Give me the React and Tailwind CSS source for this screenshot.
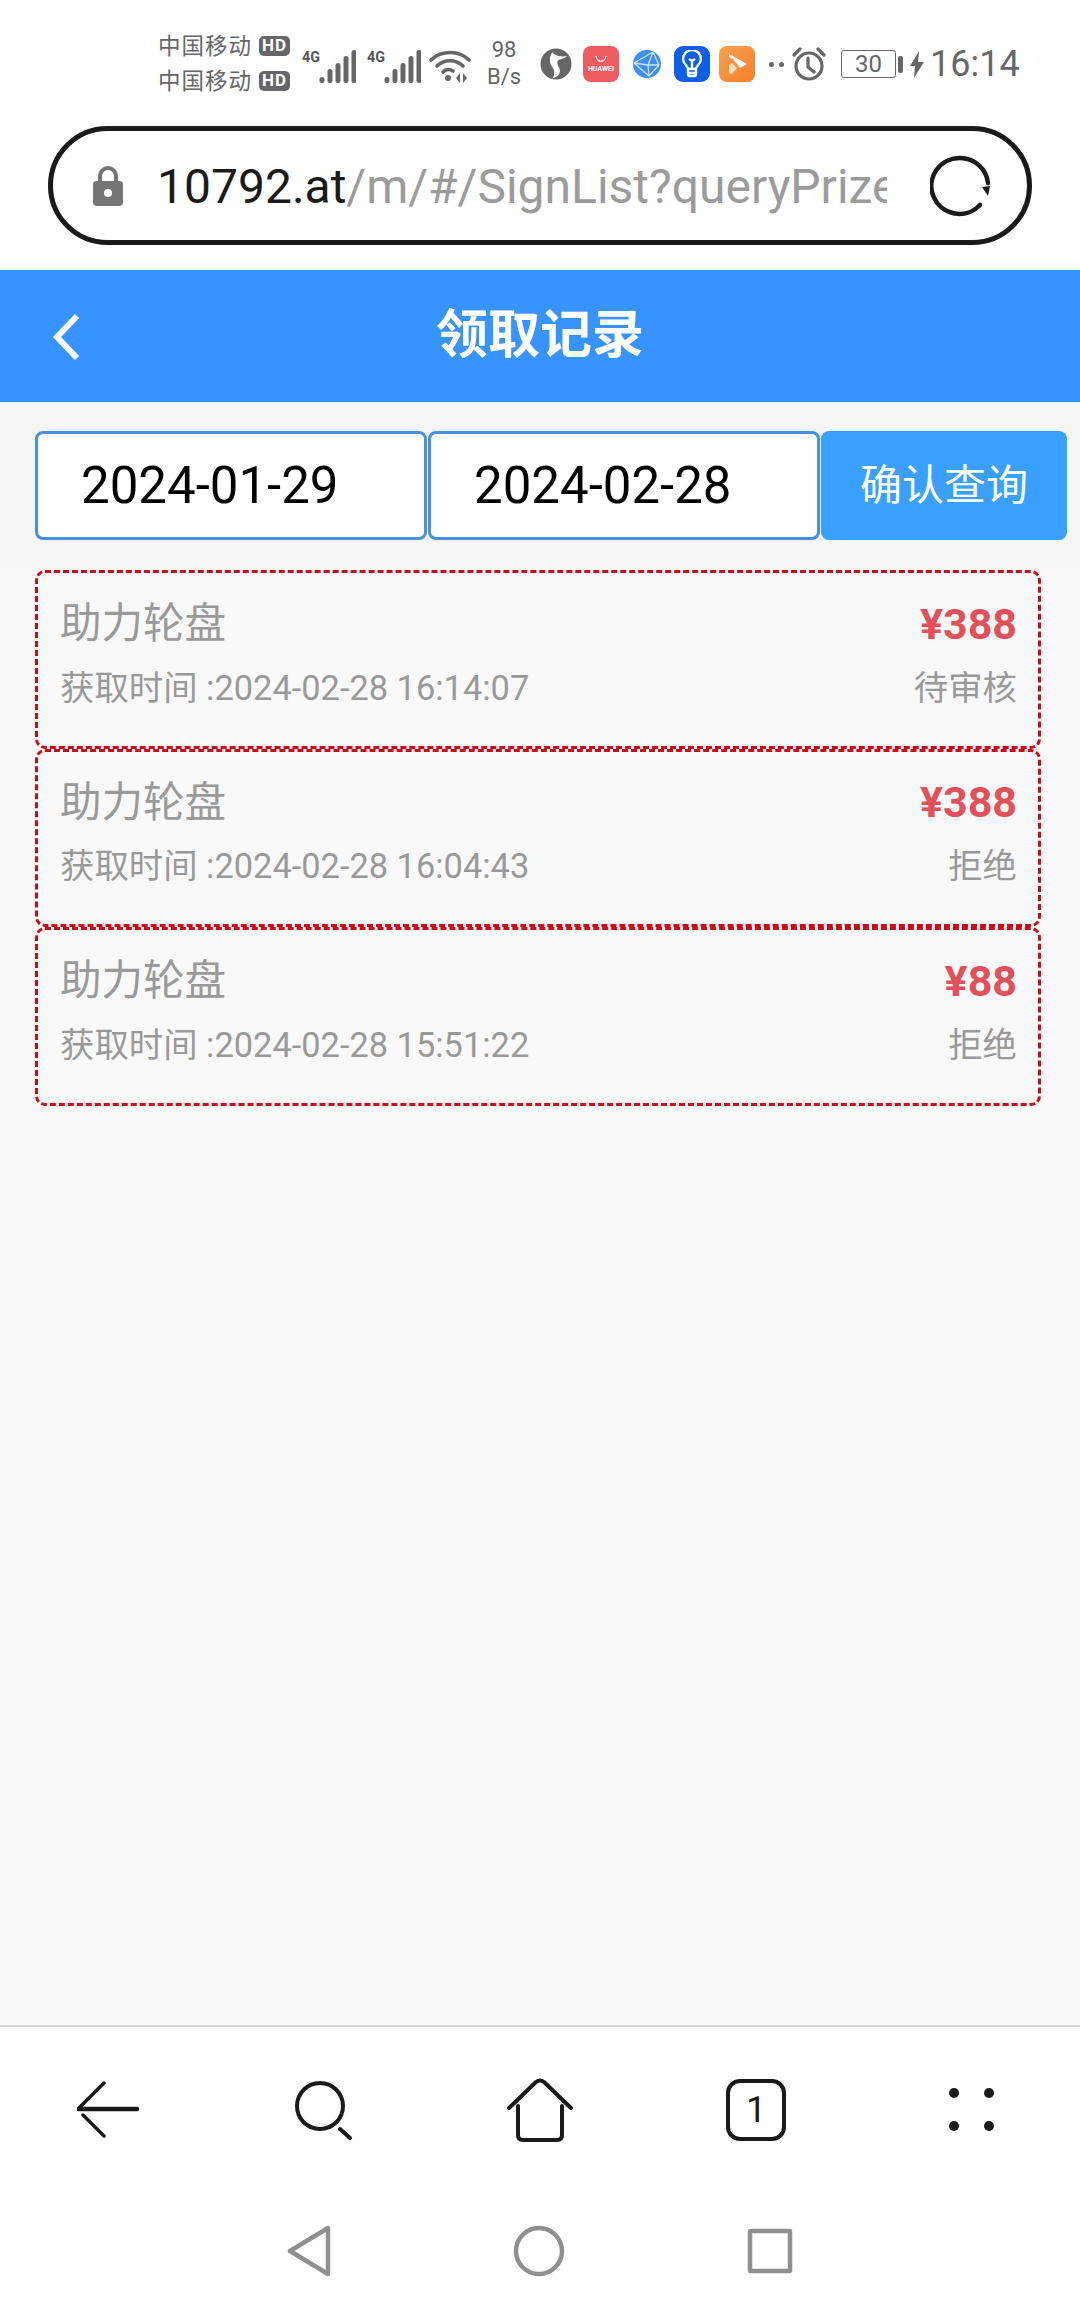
const FONT = "font-['Roboto','Noto_Sans_CJK_SC',sans-serif]";

// Cellular indicator: network label plus a dot and ascending bars
function Signal() {
  const bars = [[0, 27, 6], [8, 19, 14], [16, 13, 20], [24, 6, 27], [32, 0, 33]];
  return (
    <svg width="54" height="34" viewBox="0 0 54 34" className="shrink-0">
      <text x="0" y="13" fontSize="15" fontWeight="700" fontFamily="Roboto" fill="#555" textLength="18" lengthAdjust="spacingAndGlyphs">4G</text>
      {bars.map(([x, y, h]) => (
        <rect key={x} x={x + 17.5} y={y + 1} width="5" height={h} rx="2.5" fill="#666" />
      ))}
    </svg>
  );
}

function HdBadge() {
  return (
    <span className="ml-[7px] flex h-[20px] w-[31px] items-center justify-center rounded-[5px] bg-[#666] text-[17px] leading-none font-bold text-white">
      HD
    </span>
  );
}

function StatusBar() {
  return (
    <div className={`flex h-[126px] items-center pl-[158px] pt-[2px] ${FONT} text-[#666]`}>
      <div className="-mt-[2px] flex w-[133px] shrink-0 flex-col gap-[13px] text-[22.5px] leading-[22px] tracking-[1px] whitespace-nowrap">
        <div className="flex items-center">中国移动<HdBadge /></div>
        <div className="flex items-center">中国移动<HdBadge /></div>
      </div>
      <div className="ml-[11px] flex items-center gap-[11px] pt-[4px]">
        <Signal />
        <Signal />
      </div>
      <svg width="42" height="34" viewBox="0 0 42 34" className="ml-[8px] mt-[3px] shrink-0" fill="none" stroke="#666" strokeWidth="3.6" strokeLinecap="round">
        <path d="M2 11C12 1 30 1 40 11" />
        <path d="M8 17C15 10 27 10 34 17" />
        <path d="M14 23C17 20 21 20 24 22" />
        <circle cx="19" cy="29" r="3" fill="#666" stroke="none" />
        <path d="M31 24l-4 5 4 5zM34 24l4 5-4 5z" fill="#666" stroke="none" />
      </svg>
      <div className="-mt-[2px] ml-[12px] flex w-[42px] shrink-0 flex-col items-center text-[22px] leading-[27px]">
        <span>98</span>
        <span>B/s</span>
      </div>
      <svg width="32" height="32" viewBox="0 0 32 32" className="ml-[15px] shrink-0">
        <circle cx="16" cy="16" r="15.5" fill="#666" />
        <path d="M9 6c5 4 13 0 15-1-2 5-9 5-7 10 2 4 6 4 5 10-1 3-5 6-5 6 2-6-1-9-5-12-3-3-5-8-3-13z" fill="#fff" transform="rotate(18 16 16)" />
      </svg>
      <div className="ml-[11px] flex h-[36px] w-[36px] shrink-0 flex-col items-center justify-center rounded-[8px] bg-[#ee5b60] text-white">
        <svg width="14" height="7" viewBox="0 0 14 7" fill="none" stroke="#fff" strokeWidth="1.2"><path d="M2 0c1 7 9 7 10 0" /></svg>
        <span className="mt-[2px] text-[7px] leading-[8px] font-bold">HUAWEI</span>
      </div>
      <svg width="28" height="28" viewBox="0 0 28 28" className="ml-[14px] shrink-0">
        <circle cx="14" cy="14" r="14" fill="#3d8ff0" />
        <path d="M1 13L20 2M1 13l15 13M20 2l6 13M20 2l-5 13M26 15l-10 11M15 15l1 11M15 15L1 13M15 15l11 0" stroke="#cfe3fb" strokeWidth="1.3" fill="none" />
      </svg>
      <div className="ml-[13px] flex h-[36px] w-[36px] shrink-0 items-center justify-center rounded-[9px] bg-[#0d5fe8]">
        <svg width="22" height="28" viewBox="0 0 22 28" fill="none" stroke="#fff" strokeWidth="2.4" strokeLinejoin="round">
          <path d="M7 19c0-3-5-5-5-10a9 9 0 0 1 18 0c0 5-5 7-5 10z" />
          <path d="M11 19v-8M8 9l3 2 3-2M7 19v5a2 2 0 0 0 2 2h4a2 2 0 0 0 2-2v-5M7 23h8" />
        </svg>
      </div>
      <div className="ml-[9px] flex h-[36px] w-[36px] shrink-0 items-center justify-center rounded-[8px] bg-gradient-to-br from-[#f9a04b] to-[#f47f2b]">
        <svg width="24" height="24" viewBox="0 0 24 24">
          <path d="M4 2l18 10-7 4-7-9-4-2z" fill="#fff" />
          <path d="M7 11l5 5-5 6c-3 0-3-2-3-3v-6z" fill="#fde0c6" />
        </svg>
      </div>
      <div className="ml-[14px] flex shrink-0 gap-[5px]">
        <span className="h-[5px] w-[5px] rounded-full bg-[#666]" />
        <span className="h-[5px] w-[5px] rounded-full bg-[#666]" />
      </div>
      <svg width="34" height="34" viewBox="0 0 34 34" className="ml-[8px] shrink-0" fill="none" stroke="#666" strokeWidth="3.2" strokeLinecap="round">
        <circle cx="17" cy="19" r="13" />
        <path d="M16 11v9l6 5M2 8l6-6M32 8l-6-6" />
      </svg>
      <div className="ml-[15px] flex h-[28px] w-[55px] shrink-0 items-center justify-center rounded-[3px] border border-[#666] text-[24px] leading-none">
        30
      </div>
      <span className="ml-[2px] h-[17px] w-[5px] shrink-0 rounded-[2px] bg-[#666]" />
      <svg width="14" height="27" viewBox="0 0 14 27" className="ml-[7px] shrink-0" fill="#666">
        <path d="M9 0L0 15h5l-1 12 10-16H8z" />
      </svg>
      <span className="ml-[6px] text-[36px] leading-none whitespace-nowrap">16:14</span>
    </div>
  );
}

function AddressBar() {
  return (
    <div className="ml-[48px] mr-[48px] flex h-[119px] items-center rounded-[60px] border-[5px] border-[#1a1a1a] bg-white">
      <svg width="30" height="40" viewBox="0 0 30 40" className="ml-[40px] shrink-0">
        <path d="M7 17v-7a8 8 0 0 1 16 0v7" fill="none" stroke="#757575" strokeWidth="4" />
        <rect x="0" y="15" width="30" height="25" rx="4" fill="#757575" />
        <circle cx="15" cy="27" r="4" fill="#fff" />
      </svg>
      <div className="ml-[34px] mt-[3px] w-[730px] shrink-0 overflow-hidden text-[48px] leading-[60px] whitespace-nowrap">
        <span className="text-[#1a1a1a]">10792.at</span>
        <span className="text-[#9b9b9b]">/m/#/SignList?queryPrizeList</span>
      </div>
      <svg width="62" height="62" viewBox="0 0 62 62" className="ml-[43px] shrink-0" fill="none" stroke="#1a1a1a" strokeWidth="4.5" strokeLinecap="round">
        <path d="M30 3a28 28 0 0 1 28 25" />
        <path d="M50 50a28 28 0 1 1-20-47" />
        <path d="M52 32l8-1-2 10z" fill="#1a1a1a" stroke="none" />
      </svg>
    </div>
  );
}

function TopBar() {
  return (
    <div className="relative flex h-[132px] items-center justify-center bg-[#3793ff] text-white">
      <svg width="30" height="48" viewBox="0 0 30 48" className="absolute left-[51px] top-[43px]" fill="none" stroke="#fff" strokeWidth="6">
        <path d="M26 3L6 24l20 21" />
      </svg>
      <span className="text-[52px] leading-none font-bold">领取记录</span>
    </div>
  );
}

function DateField({ value }) {
  return (
    <div className="flex h-[109px] w-[392px] shrink-0 items-center rounded-[8px] border-[3px] border-[#4a90e2] bg-white pl-[43px] text-[51px] leading-none text-black">
      {value}
    </div>
  );
}

function Filters() {
  return (
    <div className="flex h-[166px] gap-[1px] bg-[#f4f6f8] pl-[35px] pt-[29px]">
      <DateField value="2024-01-29" />
      <DateField value="2024-02-28" />
      <button className="flex h-[109px] w-[246px] shrink-0 items-center justify-center rounded-[8px] bg-[#39a0ff] text-[42px] leading-none text-white">
        确认查询
      </button>
    </div>
  );
}

const RECORDS = [
  { time: "2024-02-28 16:14:07", amount: "¥388", state: "待审核" },
  { time: "2024-02-28 16:04:43", amount: "¥388", state: "拒绝" },
  { time: "2024-02-28 15:51:22", amount: "¥88", state: "拒绝" },
];

function RecordCard({ record }) {
  return (
    <div className="flex h-[178.5px] flex-col rounded-[10px] border-[3px] border-dashed border-[#c80c18] pl-[22px] pr-[21px] pt-[29px]">
      <div className="flex h-[44px] items-center justify-between">
        <span className="text-[41.5px] leading-none text-[#999]">助力轮盘</span>
        <span className="text-[43px] leading-none font-bold text-[#e4505a]">{record.amount}</span>
      </div>
      <div className="mt-[24px] flex h-[36px] items-center justify-between text-[34.4px] leading-none text-[#999]">
        <span>获取时间 :{record.time}</span>
        <span>{record.state}</span>
      </div>
    </div>
  );
}

function ToolbarIcons() {
  return (
    <div className="grid h-[168px] grid-cols-5 items-center border-t-2 border-[#d6d6d6] text-[#1a1a1a]">
      <div className="flex justify-center">
        <svg width="62" height="58" viewBox="0 0 62 58" fill="none" stroke="#1a1a1a" strokeWidth="3.5" strokeLinecap="round">
          <path d="M2 28h58" strokeWidth="4.5" />
          <path d="M1 28L27 2M6 34l21 21" />
        </svg>
      </div>
      <div className="flex justify-center">
        <svg width="60" height="60" viewBox="0 0 60 60" fill="none" stroke="#1a1a1a" strokeWidth="4" strokeLinecap="round">
          <circle cx="26" cy="26" r="23" />
          <path d="M46 49l10 9" />
        </svg>
      </div>
      <div className="flex justify-center">
        <svg width="66" height="64" viewBox="0 0 66 64" fill="none" stroke="#1a1a1a" strokeWidth="4" strokeLinecap="round" strokeLinejoin="round">
          <path d="M2 30L29 4q4-3 8 0l27 26" />
          <path d="M11 28v29q0 5 5 5h34q5 0 5-5V28" />
        </svg>
      </div>
      <div className="flex justify-center">
        <div className="flex h-[62px] w-[60px] items-center justify-center rounded-[14px] border-4 border-[#1a1a1a] text-[36px] leading-none">
          1
        </div>
      </div>
      <div className="flex justify-center">
        <svg width="46" height="44" viewBox="0 0 46 44" fill="#1a1a1a">
          <circle cx="5" cy="5" r="5" />
          <circle cx="40" cy="5" r="5" />
          <circle cx="5" cy="38" r="5" />
          <circle cx="40" cy="38" r="5" />
        </svg>
      </div>
    </div>
  );
}

function SystemNav() {
  return (
    <div className="flex h-[117px] items-start justify-center gap-[182px] bg-white pt-[32px]">
      <svg width="44" height="52" viewBox="0 0 44 52" fill="none" stroke="#8f8f8f" strokeWidth="4.5" strokeLinejoin="round">
        <path d="M3 26L41 3v46z" />
      </svg>
      <svg width="52" height="52" viewBox="0 0 52 52" fill="none" stroke="#8f8f8f" strokeWidth="4.5">
        <circle cx="26" cy="26" r="23" />
      </svg>
      <svg width="46" height="46" viewBox="0 0 46 46" className="mt-[3px]" fill="none" stroke="#8f8f8f" strokeWidth="4.5" strokeLinejoin="round">
        <rect x="3" y="3" width="40" height="40" rx="1" />
      </svg>
    </div>
  );
}

export default function App() {
  return (
    <div className={`flex h-[2310px] w-[1080px] flex-col overflow-hidden bg-white ${FONT}`}>
      <StatusBar />
      <AddressBar />
      <div className="h-[25px] shrink-0" />
      <TopBar />
      <Filters />
      <div className="flex flex-1 flex-col bg-[#f9f9f9] pl-[35px] pr-[39px] pt-[2px]">
        {RECORDS.map((r) => (
          <RecordCard key={r.time} record={r} />
        ))}
      </div>
      <ToolbarIcons />
      <SystemNav />
    </div>
  );
}
